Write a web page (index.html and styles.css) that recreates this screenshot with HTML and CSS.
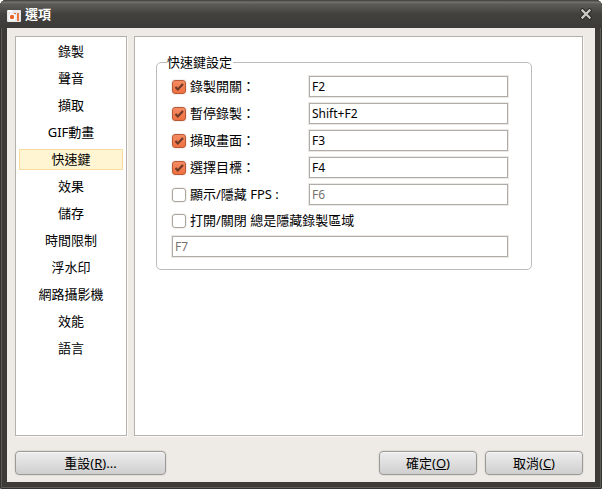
FILE: index.html
```html
<!DOCTYPE html>
<html lang="zh-Hant">
<head>
    <meta charset="UTF-8">
    <meta name="viewport" content="width=device-width, initial-scale=1.0">
    <title>選項</title>
    <link rel="stylesheet" href="styles.css">
</head>
<body>
<div class="window">
    <!-- Title bar -->
    <header class="titlebar">
        <svg class="app-icon" width="14" height="12" viewBox="0 0 14 12" aria-hidden="true">
            <rect width="14" height="12" rx="1" fill="#e9e9e9"/>
            <rect x="1" y="0" width="4" height="2" fill="#fff"/>
            <circle cx="5" cy="7" r="3.5" fill="#fff"/>
            <circle cx="5" cy="7" r="2.2" fill="#e8642a"/>
            <rect x="7" y="3" width="2" height="1" fill="#e8642a"/>
            <rect x="10" y="3" width="2" height="8" fill="#ee7740"/>
        </svg>
        <h1 class="title">選項</h1>
        <button class="close" type="button" aria-label="關閉">
            <svg width="12" height="12" viewBox="0 0 12 12">
                <path d="M2.5 2.5 L9.5 9.5 M9.5 2.5 L2.5 9.5" stroke="#20201d" stroke-width="4" stroke-linecap="square"/>
                <path d="M2.5 2.5 L9.5 9.5 M9.5 2.5 L2.5 9.5" stroke="#c9c8c4" stroke-width="2.4" stroke-linecap="square"/>
            </svg>
        </button>
    </header>

    <form class="content">
        <div class="panes">
            <!-- Categories -->
            <nav class="sidebar">
                <a href="#record">錄製</a>
                <a href="#sound">聲音</a>
                <a href="#capture">擷取</a>
                <a href="#gif">GIF動畫</a>
                <a href="#hotkeys" class="active">快速鍵</a>
                <a href="#effects">效果</a>
                <a href="#save">儲存</a>
                <a href="#limit">時間限制</a>
                <a href="#watermark">浮水印</a>
                <a href="#webcam">網路攝影機</a>
                <a href="#performance">效能</a>
                <a href="#language">語言</a>
            </nav>

            <!-- Hotkey settings -->
            <main class="panel">
                <fieldset class="group">
                    <legend>快速鍵設定</legend>
                    <div class="rows">
                        <label class="check"><input type="checkbox" checked>錄製開關：</label>
                        <input class="key" type="text" value="F2" aria-label="錄製開關">
                        <label class="check"><input type="checkbox" checked>暫停錄製：</label>
                        <input class="key" type="text" value="Shift+F2" aria-label="暫停錄製">
                        <label class="check"><input type="checkbox" checked>擷取畫面：</label>
                        <input class="key" type="text" value="F3" aria-label="擷取畫面">
                        <label class="check"><input type="checkbox" checked>選擇目標：</label>
                        <input class="key" type="text" value="F4" aria-label="選擇目標">
                        <label class="check"><input type="checkbox">顯示/隱藏 FPS :</label>
                        <input class="key" type="text" value="F6" aria-label="顯示/隱藏 FPS" disabled>
                        <label class="check wide"><input type="checkbox">打開/關閉 總是隱藏錄製區域</label>
                        <input class="key wide" type="text" value="F7" aria-label="總是隱藏錄製區域" disabled>
                    </div>
                </fieldset>
            </main>
        </div>

        <footer class="actions">
            <button class="btn reset" type="button">重設(<u>R</u>)...</button>
            <button class="btn" type="submit">確定(<u>O</u>)</button>
            <button class="btn" type="button">取消(<u>C</u>)</button>
        </footer>
    </form>
</div>
</body>
</html>
```

FILE: styles.css
```css
* {
    box-sizing: border-box;
}

body {
    margin: 0;
    background-color: #fff;
    color: #000;
    font-family: "Noto Sans", "Noto Sans CJK TC", sans-serif;
    font-size: 13px;
    line-height: 19px;
}

.window {
    display: flex;
    flex-direction: column;
    min-height: 100vh;
    padding: 0 7px 7px;
    background-color: #3c3b37;
    border-radius: 6px 6px 2px 2px;
    box-shadow: inset 0 0 0 1px #33322f, inset 0 0 0 2px #5c5b55;
}

/* Title bar */
.titlebar {
    display: flex;
    align-items: center;
    height: 28px;
    margin: 0 -7px;
    padding: 0 10px 0 7px;
    background: linear-gradient(#4a4945 0, #4a4945 1px, #797873 2px, #5c5b57 4px, #53524e 8px, #42413d 14px, #3c3b37 100%);
    border-radius: 6px 6px 0 0;
}

.app-icon {
    margin-top: 4px;
}

.title {
    flex: 1;
    margin: 0 0 0 4px;
    color: #fff;
    font-size: 13px;
    font-weight: bold;
    line-height: 20px;
}

.close {
    display: flex;
    padding: 0;
    border: none;
    background: none;
    cursor: pointer;
}

.content {
    display: flex;
    flex: 1;
    flex-direction: column;
    gap: 15px;
    padding: 8px 12px 7px 8px;
    background-color: #eeebe7;
}

.panes {
    display: flex;
    flex: 1;
    gap: 7px;
}

.sidebar,
.panel {
    background-color: #fff;
    border: 1px solid #b5b2ad;
    box-shadow: 1px 1px 0 #faf9f7;
}

.sidebar {
    display: flex;
    flex: 0 0 112px;
    flex-direction: column;
    gap: 6px;
    padding: 4px 3px;
    text-align: center;
}

.sidebar a {
    border: 1px solid transparent;
    color: #000;
    text-decoration: none;
}

.sidebar .active {
    background-color: #fff5d3;
    border-color: #fbdca0;
}

.panel {
    flex: 1;
    padding: 16px 50px 16px 21px;
}

.group {
    margin: 0;
    padding: 0 23px 12px 15px;
    border: 1px solid #bfbabb;
    border-radius: 5px;
}

.group legend {
    margin-left: -5px;
    padding: 0 1px 0 0;
}

.rows {
    display: grid;
    grid-template-columns: 137px 1fr;
    grid-template-rows: repeat(5, 21px) 19px 21px;
    row-gap: 6px;
    margin-top: 4px;
}

.wide {
    grid-column: 1 / -1;
}

.check {
    display: flex;
    align-items: center;
    gap: 4px;
    white-space: nowrap;
}

.check input {
    appearance: none;
    width: 14px;
    height: 14px;
    margin: 0;
    background-color: #fff;
    border: 1px solid #aaa69d;
    border-radius: 3px;
    box-shadow: 0 0 0 1px #f3f1ee;
}

.check input:checked {
    background: url("data:image/svg+xml,%3Csvg xmlns='http://www.w3.org/2000/svg' viewBox='0 0 12 12'%3E%3Cpath d='M2.5 6L4.8 8.5L10 3' fill='none' stroke='%236e3a28' stroke-width='2.2'/%3E%3C/svg%3E"), linear-gradient(#f58c64, #ef7040);
    border-color: #b95836;
}

.key {
    width: 100%;
    min-width: 0;
    padding: 0 2px;
    background-color: #fff;
    border: 1px solid #b0ada8;
    box-shadow: 0 0 0 1px #ebe8e5;
    color: #000;
    font-family: inherit;
    font-size: 12px;
}

.key:disabled {
    color: #77736e;
}

/* Bottom buttons */
.actions {
    display: flex;
    gap: 8px;
}

.btn {
    width: 98px;
    height: 24px;
    padding: 0;
    background: linear-gradient(#ededed, #dedede 50%, #cfcfcf);
    border: 1px solid #9c9a97;
    border-radius: 4px;
    box-shadow: inset 0 1px 0 #f7f7f7, 0 0 0 1px #e2dfdb;
    color: #000;
    font-family: inherit;
    font-size: 13px;
    line-height: 19px;
}

.reset {
    width: 151px;
    margin-right: auto;
}
```
